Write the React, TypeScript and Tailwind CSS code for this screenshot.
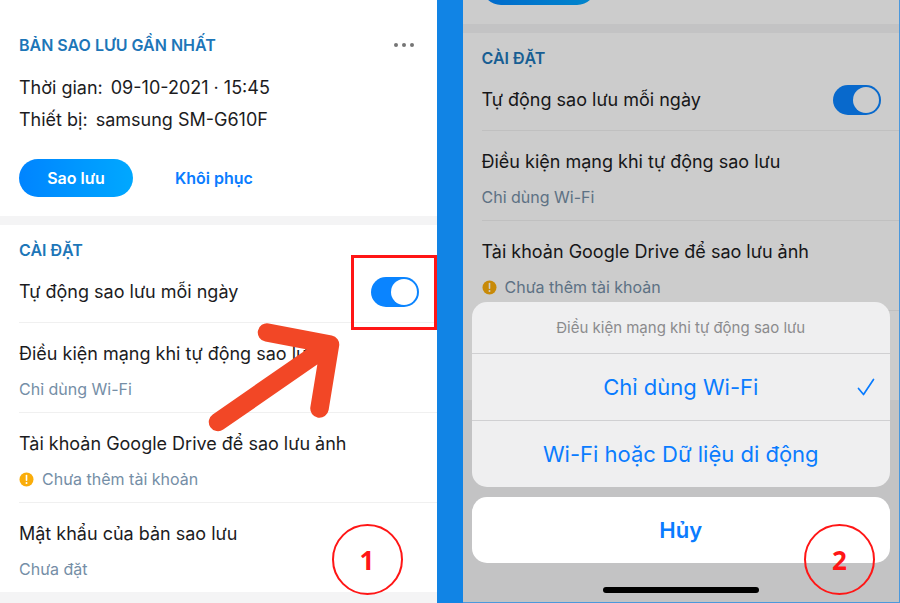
import React, { useId } from "react";

function BackupSummary() {
  return (
    <section className="bg-white px-[19px] pt-[33px] pb-[19px]">
      <div className="flex h-6 items-center justify-between">
        <h2 className="text-base leading-6 font-semibold text-[#1d76b8]">BẢN SAO LƯU GẦN NHẤT</h2>
        <button type="button" aria-label="Tùy chọn" className="flex h-6 items-center gap-1 px-1 text-[#757575]">
          <span className="size-1 rounded-full bg-current" />
          <span className="size-1 rounded-full bg-current" />
          <span className="size-1 rounded-full bg-current" />
        </button>
      </div>
      <dl className="mt-[15px] text-lg leading-8">
        <div className="flex gap-2">
          <dt>Thời gian:</dt>
          <dd>09-10-2021 · 15:45</dd>
        </div>
        <div className="flex gap-2">
          <dt>Thiết bị:</dt>
          <dd>samsung SM-G610F</dd>
        </div>
      </dl>
      <div className="mt-[23px] flex items-center gap-[42px]">
        <button
          type="button"
          className="h-[38px] w-[114px] rounded-full bg-linear-to-r from-[#0084ff] to-[#00a8ff] text-base font-semibold text-white"
        >
          Sao lưu
        </button>
        <button type="button" className="h-[38px] text-base font-semibold text-[#0a7cff]">
          Khôi phục
        </button>
      </div>
    </section>
  );
}

function ScrolledSummary() {
  return (
    <section className="flex h-6 items-end overflow-hidden bg-white px-[19px] pb-[19px]">
      <button
        type="button"
        aria-label="Sao lưu"
        className="h-[38px] w-[114px] shrink-0 rounded-full bg-linear-to-r from-[#0084ff] to-[#00a8ff]"
      />
    </section>
  );
}

function Row({ title, note, warning, last }: { title: string; note: string; warning?: boolean; last?: boolean }) {
  return (
    <div className={last ? "pt-[17px] pb-[11px]" : "border-b border-[#f0f0f0] pt-[17px] pb-[11px]"}>
      <p className="text-lg leading-7 whitespace-nowrap">{title}</p>
      <p className="mt-[9px] flex items-center gap-2 text-base leading-6 text-[#758ea6]">
        {warning && (
          <svg viewBox="0 0 15 15" className="size-[15px]" aria-hidden="true">
            <circle cx="7.5" cy="7.5" r="7" fill="#faad0a" />
            <path d="M7.5 3.6v4.6" stroke="#fff" strokeWidth="1.6" strokeLinecap="round" />
            <circle cx="7.5" cy="10.9" r="1" fill="#fff" />
          </svg>
        )}
        {note}
      </p>
    </div>
  );
}

function Settings({ password }: { password?: boolean }) {
  const id = useId();
  return (
    <section className="border-t-[9px] border-[#f4f4f5] bg-white pt-[13px] pl-[19px]">
      <h2 className="text-base leading-6 font-semibold text-[#1d76b8]">CÀI ĐẶT</h2>
      <div className="flex h-[61px] items-center justify-between border-b border-[#f0f0f0] pr-[18px]">
        <label htmlFor={id} className="text-lg leading-7">
          Tự động sao lưu mỗi ngày
        </label>
        <input
          id={id}
          type="checkbox"
          defaultChecked
          className="relative h-[30px] w-12 appearance-none rounded-full bg-[#c8c8c8] before:absolute before:top-[2px] before:left-[2px] before:size-[26px] before:rounded-full before:bg-white checked:bg-[#0a84ff] checked:before:left-5"
        />
      </div>
      <Row title="Điều kiện mạng khi tự động sao lưu" note="Chỉ dùng Wi-Fi" />
      <Row title="Tài khoản Google Drive để sao lưu ảnh" note="Chưa thêm tài khoản" warning />
      {password ? <Row title="Mật khẩu của bản sao lưu" note="Chưa đặt" last /> : <div className="h-[89px]" />}
    </section>
  );
}

function StepNumber({ value, place }: { value: number; place: string }) {
  return (
    <span
      className={`absolute flex size-[71px] items-center justify-center rounded-full border-2 border-[#ff1616] font-['Open_Sans',sans-serif] text-[26px] leading-8 font-bold text-[#ff1616] ${place}`}
    >
      {value}
    </span>
  );
}

function ActionSheet() {
  return (
    <div className="absolute inset-0 flex flex-col items-center justify-end bg-black/20 px-[9px] pb-[9px]">
      <div role="dialog" aria-label="Điều kiện mạng khi tự động sao lưu" className="w-full text-[#0a7cff]">
        <div className="divide-y divide-[#d0d0d2] overflow-hidden rounded-[15px] bg-[#efeff0]">
          <p className="flex h-[52px] items-center justify-center text-[15px] leading-5 text-[#8b8b8d]">
            Điều kiện mạng khi tự động sao lưu
          </p>
          <button type="button" className="relative flex h-[67px] w-full items-center justify-center text-[22px]">
            Chỉ dùng Wi-Fi
            <svg viewBox="0 0 18 18" className="absolute right-[15px] size-[18px]" fill="none" aria-hidden="true">
              <path d="M1.5 10.5 6.5 16.5 16.5 1.5" stroke="currentColor" strokeWidth="1.7" strokeLinecap="round" strokeLinejoin="round" />
            </svg>
          </button>
          <button type="button" className="flex h-[66px] w-full items-center justify-center text-[22px]">
            Wi-Fi hoặc Dữ liệu di động
          </button>
        </div>
        <button type="button" className="mt-[10px] h-[66px] w-full rounded-[15px] bg-white text-[22px] font-semibold">
          Hủy
        </button>
      </div>
      <span className="mt-6 h-[6px] w-[156px] rounded-full bg-black" />
    </div>
  );
}

export default function App() {
  return (
    <main className="flex min-h-screen bg-[#1184e5] font-['Inter','Liberation_Sans',sans-serif] text-[#1c1c1e]">
      <div className="relative flex-1 overflow-hidden bg-[#f4f4f5]">
        <BackupSummary />
        <Settings password />
        <span className="absolute top-[255px] right-0 h-[75px] w-[86px] border-3 border-[#ff1616]" />
        <svg viewBox="0 0 132 110" className="absolute top-[322px] right-[97px] h-[110px] w-[132px]" fill="none" aria-hidden="true">
          <path d="M10 100 122 22.500M59 10.500 122 22.500 111.500 86.500" stroke="#f24726" strokeWidth="18.5" strokeLinecap="round" strokeLinejoin="round" />
        </svg>
        <StepNumber value={1} place="right-[34px] bottom-2" />
      </div>
      <div className="w-[26px] shrink-0" />
      <div className="relative flex-1 overflow-hidden border-r border-b border-[#4c98dc] bg-[#f4f4f5]">
        <ScrolledSummary />
        <Settings />
        <ActionSheet />
        <StepNumber value={2} place="right-6 bottom-[7px]" />
      </div>
    </main>
  );
}
